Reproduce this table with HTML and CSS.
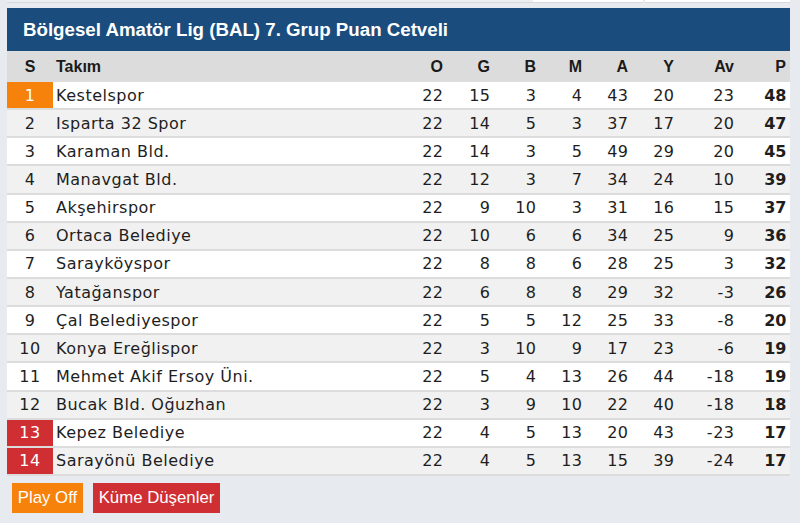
FILE: index.html
```html
<!DOCTYPE html>
<html lang="tr">
<head>
<meta charset="utf-8">
<title>Puan Cetveli</title>
<link rel="stylesheet" href="styles.css">
</head>
<body>
<div class="topstrip">
  <div class="ts-left"></div>
  <div class="ts-cell ts-a"></div>
  <div class="ts-cell ts-b"></div>
</div>
<div class="standings">
  <h2 class="title">Bölgesel Amatör Lig (BAL) 7. Grup Puan Cetveli</h2>
  <div class="table">
    <div class="row head">
      <div class="c pos">S</div><div class="c team">Takım</div>
      <div class="c n">O</div><div class="c n">G</div><div class="c n">B</div><div class="c n">M</div><div class="c n">A</div><div class="c n">Y</div><div class="c n">Av</div><div class="c n">P</div>
    </div>
    <div class="row"><div class="c pos po">1</div><div class="c team">Kestelspor</div><div class="c n">22</div><div class="c n">15</div><div class="c n">3</div><div class="c n">4</div><div class="c n">43</div><div class="c n">20</div><div class="c n">23</div><div class="c n pts">48</div></div>
    <div class="row"><div class="c pos">2</div><div class="c team">Isparta 32 Spor</div><div class="c n">22</div><div class="c n">14</div><div class="c n">5</div><div class="c n">3</div><div class="c n">37</div><div class="c n">17</div><div class="c n">20</div><div class="c n pts">47</div></div>
    <div class="row"><div class="c pos">3</div><div class="c team">Karaman Bld.</div><div class="c n">22</div><div class="c n">14</div><div class="c n">3</div><div class="c n">5</div><div class="c n">49</div><div class="c n">29</div><div class="c n">20</div><div class="c n pts">45</div></div>
    <div class="row"><div class="c pos">4</div><div class="c team">Manavgat Bld.</div><div class="c n">22</div><div class="c n">12</div><div class="c n">3</div><div class="c n">7</div><div class="c n">34</div><div class="c n">24</div><div class="c n">10</div><div class="c n pts">39</div></div>
    <div class="row"><div class="c pos">5</div><div class="c team">Akşehirspor</div><div class="c n">22</div><div class="c n">9</div><div class="c n">10</div><div class="c n">3</div><div class="c n">31</div><div class="c n">16</div><div class="c n">15</div><div class="c n pts">37</div></div>
    <div class="row"><div class="c pos">6</div><div class="c team">Ortaca Belediye</div><div class="c n">22</div><div class="c n">10</div><div class="c n">6</div><div class="c n">6</div><div class="c n">34</div><div class="c n">25</div><div class="c n">9</div><div class="c n pts">36</div></div>
    <div class="row"><div class="c pos">7</div><div class="c team">Sarayköyspor</div><div class="c n">22</div><div class="c n">8</div><div class="c n">8</div><div class="c n">6</div><div class="c n">28</div><div class="c n">25</div><div class="c n">3</div><div class="c n pts">32</div></div>
    <div class="row"><div class="c pos">8</div><div class="c team">Yatağanspor</div><div class="c n">22</div><div class="c n">6</div><div class="c n">8</div><div class="c n">8</div><div class="c n">29</div><div class="c n">32</div><div class="c n">-3</div><div class="c n pts">26</div></div>
    <div class="row"><div class="c pos">9</div><div class="c team">Çal Belediyespor</div><div class="c n">22</div><div class="c n">5</div><div class="c n">5</div><div class="c n">12</div><div class="c n">25</div><div class="c n">33</div><div class="c n">-8</div><div class="c n pts">20</div></div>
    <div class="row"><div class="c pos">10</div><div class="c team">Konya Ereğlispor</div><div class="c n">22</div><div class="c n">3</div><div class="c n">10</div><div class="c n">9</div><div class="c n">17</div><div class="c n">23</div><div class="c n">-6</div><div class="c n pts">19</div></div>
    <div class="row"><div class="c pos">11</div><div class="c team">Mehmet Akif Ersoy Üni.</div><div class="c n">22</div><div class="c n">5</div><div class="c n">4</div><div class="c n">13</div><div class="c n">26</div><div class="c n">44</div><div class="c n">-18</div><div class="c n pts">19</div></div>
    <div class="row"><div class="c pos">12</div><div class="c team">Bucak Bld. Oğuzhan</div><div class="c n">22</div><div class="c n">3</div><div class="c n">9</div><div class="c n">10</div><div class="c n">22</div><div class="c n">40</div><div class="c n">-18</div><div class="c n pts">18</div></div>
    <div class="row"><div class="c pos rel">13</div><div class="c team">Kepez Belediye</div><div class="c n">22</div><div class="c n">4</div><div class="c n">5</div><div class="c n">13</div><div class="c n">20</div><div class="c n">43</div><div class="c n">-23</div><div class="c n pts">17</div></div>
    <div class="row"><div class="c pos rel">14</div><div class="c team">Sarayönü Belediye</div><div class="c n">22</div><div class="c n">4</div><div class="c n">5</div><div class="c n">13</div><div class="c n">15</div><div class="c n">39</div><div class="c n">-24</div><div class="c n pts">17</div></div>
  </div>
  <div class="legend">
    <span class="tag tag-po">Play Off</span>
    <span class="tag tag-rel">Küme Düşenler</span>
  </div>
</div>
</body>
</html>
```

FILE: styles.css
```css
* { box-sizing: border-box; }
html, body {
  margin: 0;
  padding: 0;
  background: #e7ebef;
}
body {
  font-family: "DejaVu Sans", Verdana, sans-serif;
  color: #1e1e1e;
  width: 800px;
  height: 523px;
  overflow: hidden;
}
.topstrip {
  display: flex;
  height: 3px;
  margin-left: 7px;
  width: 783px;
}
.ts-left {
  width: 526px;
  background: #eceff2;
  border-bottom: 1px solid #d6d9dc;
}
.ts-cell {
  background: #ffffff;
  border-bottom: 1px solid #d6d9dc;
}
.ts-a { width: 110px; }
.ts-b { width: 145px; margin-left: 2px; }

.standings {
  margin: 5px 0 0 7px;
  width: 783px;
}
.title {
  margin: 0;
  height: 43px;
  background: #1a4d7e;
  color: #ffffff;
  font-family: "Liberation Sans", Arial, sans-serif;
  font-weight: bold;
  font-size: 18.7px;
  line-height: 43px;
  padding-left: 16px;
}
.table { width: 783px; }
.row {
  display: grid;
  grid-template-columns: 46px 348px 46px 47px 46px 46px 46px 46px 60px 52px;
  height: 28.15px;
  border-bottom: 2px solid #dcdcdc;
  background: #ffffff;
  font-size: 16px;
  letter-spacing: 0.5px;
  align-items: center;
}
.row:nth-child(odd) { background: #f1f1f1; }
.row.head {
  height: 31px;
  background: #dcdcdc;
  border-bottom: 0;
  font-family: "Liberation Sans", Arial, sans-serif;
  font-weight: bold;
  font-size: 16px;
  letter-spacing: 0;
  color: #1a1a1a;
}
.c {
  height: 100%;
  display: flex;
  align-items: center;
  white-space: nowrap;
}
.pos { justify-content: center; }
.team { padding-left: 3px; }
.n { justify-content: flex-end; padding-right: 4px; }
.row:not(.head) .n { padding-right: 3.5px; }
.pts { font-weight: bold; letter-spacing: 0; }
.pos.po { background: #f7820b; color: #ffffff; }
.pos.rel { background: #cf2f33; color: #ffffff; }

.legend {
  display: flex;
  gap: 10px;
  margin: 7px 0 0 5px;
}
.tag {
  display: inline-flex;
  align-items: center;
  justify-content: center;
  height: 30px;
  padding: 0 4px;
  white-space: nowrap;
  color: #ffffff;
  font-family: "Liberation Sans", Arial, sans-serif;
  font-size: 16.8px;
}
.tag-po { background: #f7820b; width: 71px; }
.tag-rel { background: #cf2f33; width: 127px; }
```
